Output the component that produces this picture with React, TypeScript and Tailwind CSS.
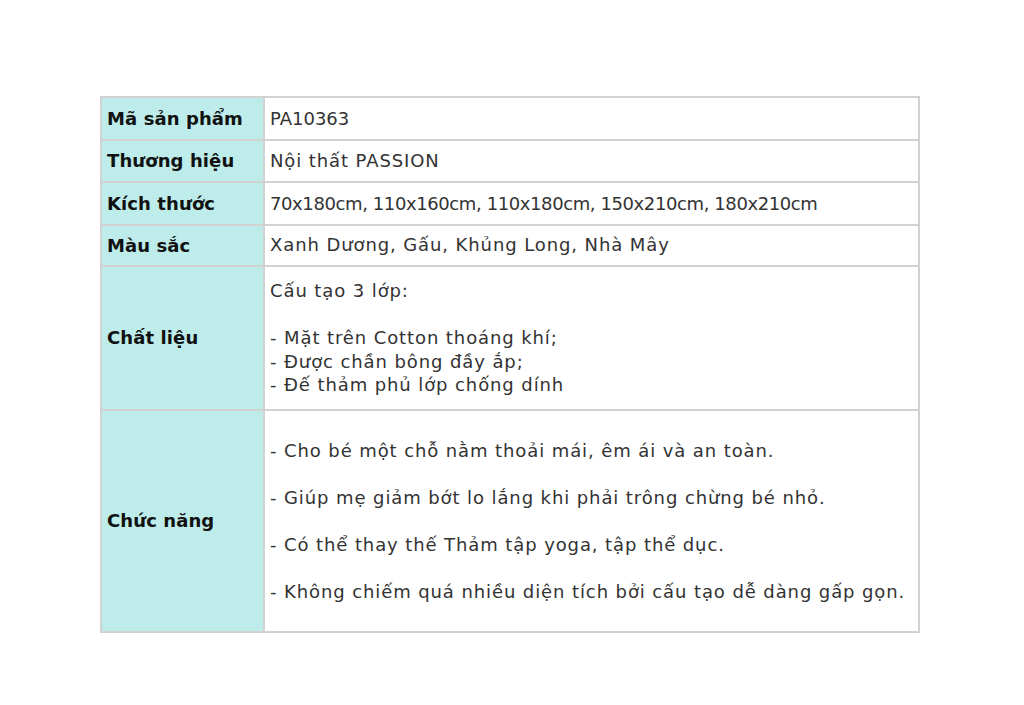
import React from "react";

const rows: { label: string; lines: string[]; tall?: "mat" | "fn"; digits?: boolean }[] = [
  { label: "Mã sản phẩm", lines: ["PA10363"], digits: true },
  { label: "Thương hiệu", lines: ["Nội thất PASSION"] },
  {
    label: "Kích thước",
    lines: ["70x180cm, 110x160cm, 110x180cm, 150x210cm, 180x210cm"],
    digits: true,
  },
  { label: "Màu sắc", lines: ["Xanh Dương, Gấu, Khủng Long, Nhà Mây"] },
  {
    label: "Chất liệu",
    lines: [
      "Cấu tạo 3 lớp:",
      "",
      "- Mặt trên Cotton thoáng khí;",
      "- Được chần bông đầy ắp;",
      "- Đế thảm phủ lớp chống dính",
    ],
    tall: "mat",
  },
  {
    label: "Chức năng",
    lines: [
      "- Cho bé một chỗ nằm thoải mái, êm ái và an toàn.",
      "",
      "- Giúp mẹ giảm bớt lo lắng khi phải trông chừng bé nhỏ.",
      "",
      "- Có thể thay thế Thảm tập yoga, tập thể dục.",
      "",
      "- Không chiếm quá nhiều diện tích bởi cấu tạo dễ dàng gấp gọn.",
    ],
    tall: "fn",
  },
];

export default function App() {
  return (
    <div className="min-h-[705px] w-[1024px] bg-white pt-[96px] pl-[100px] font-['DejaVu_Sans',sans-serif]">
      <table className="w-[820px] border-collapse border-2 border-[#d2d2d2] text-[18px]">
        <tbody>
          {rows.map((r) => (
            <tr key={r.label}>
              <td className="w-[163px] border-2 border-[#d2d2d2] bg-[#bdecea] px-[5px] align-middle font-bold tracking-[0.1px] text-[#111]">
                {r.label}
              </td>
              <td
                className={
                  "border-2 border-[#d2d2d2] px-[5px] text-[#333] leading-[23.5px] " +
                  (r.label === "Kích thước"
                    ? "tracking-[-0.4px] "
                    : r.digits
                    ? "tracking-[0px] "
                    : "tracking-[0.9px] ") +
                  (r.tall === "mat"
                    ? "py-[12.5px]"
                    : r.tall === "fn"
                    ? "py-[27.5px]"
                    : r.label === "Màu sắc"
                    ? "h-[41px] py-[7px]"
                    : "h-[42.5px] py-[8px]")
                }
              >
                {r.lines.map((l, i) => (
                  <div key={i} className="min-h-[23.5px]">
                    {l}
                  </div>
                ))}
              </td>
            </tr>
          ))}
        </tbody>
      </table>
    </div>
  );
}
